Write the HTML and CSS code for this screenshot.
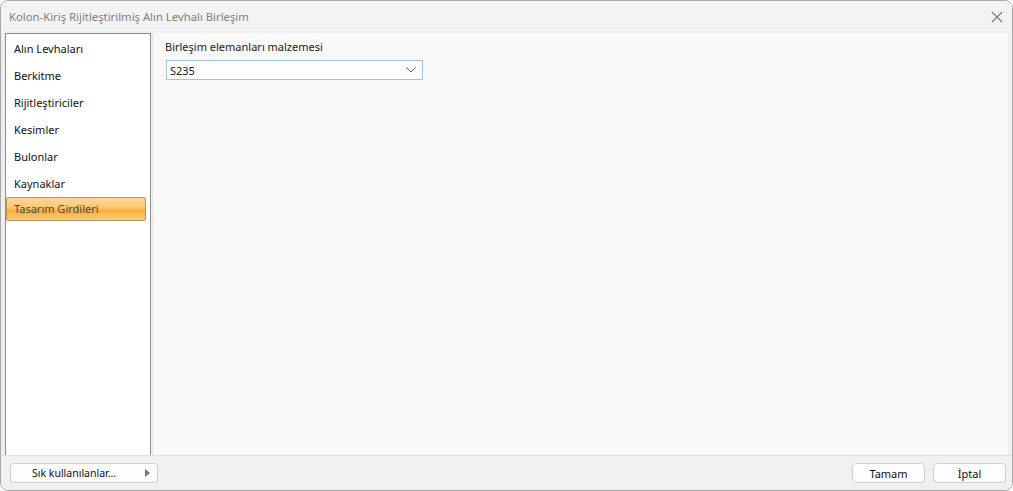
FILE: index.html
```html
<!DOCTYPE html>
<html>
<head>
<meta charset="utf-8">
<link rel="stylesheet" href="styles.css">
</head>
<body>
<div class="window">
  <div class="titlebar">
    <span class="title">Kolon-Kiriş Rijitleştirilmiş Alın Levhalı Birleşim</span>
    <svg class="close" width="12" height="12" viewBox="0 0 12 12"><path d="M1 1L11 11M11 1L1 11" stroke="#7a7a7a" stroke-width="1.1" fill="none"/></svg>
  </div>
  <div class="body">
    <div class="nav">
      <div class="item">Alın Levhaları</div>
      <div class="item">Berkitme</div>
      <div class="item">Rijitleştiriciler</div>
      <div class="item">Kesimler</div>
      <div class="item">Bulonlar</div>
      <div class="item">Kaynaklar</div>
      <div class="item selected">Tasarım Girdileri</div>
    </div>
    <div class="content">
      <div class="label">Birleşim elemanları malzemesi</div>
      <div class="select">
        <span>S235</span>
        <svg width="10" height="6" viewBox="0 0 10 6"><path d="M0.5 0.5L5 5L9.5 0.5" stroke="#666" stroke-width="1" fill="none"/></svg>
      </div>
    </div>
  </div>
  <div class="footer">
    <div class="favbtn"><span class="favtext">Sık kullanılanlar…</span><svg class="arrow" width="5" height="8" viewBox="0 0 5 8"><path d="M0 0L5 4L0 8Z" fill="#777"/></svg></div>
    <div class="spacer"></div>
    <div class="btn ok">Tamam</div>
    <div class="btn ok">İptal</div>
  </div>
</div>
</body>
</html>
```

FILE: styles.css
```css
html, body {
  margin: 0;
  padding: 0;
  background: #ffffff;
}
body {
  font-family: "Noto Sans", "Open Sans", sans-serif;
  font-size: 11px;
  color: #1a1a1a;
}
.window {
  width: 1013px;
  height: 491px;
  box-sizing: border-box;
  border: 1px solid #a8a8a8;
  border-radius: 8px;
  overflow: hidden;
  background: #f0f0f0;
  display: flex;
  flex-direction: column;
}
.titlebar {
  height: 30px;
  flex: none;
  background: #f3f3f3;
  display: flex;
  align-items: center;
  justify-content: space-between;
  padding: 0 9px 0 8px;
}
.title {
  font-size: 11.3px;
  color: #808080;
}
.close {
  margin-top: 1px;
}
.body {
  flex: 1;
  display: flex;
  padding: 2px 4px 0 4px;
  background: #f0f0f0;
  min-height: 0;
}
.nav {
  width: 146px;
  flex: none;
  background: #ffffff;
  border: 1px solid #8e8e8e;
  padding-top: 1px;
  box-sizing: border-box;
  height: 423px;
}
.item {
  height: 27px;
  line-height: 27px;
  padding-left: 8px;
  color: #111;
}
.item.selected {
  margin: 0 4px 0 0;
  height: 24px;
  line-height: 22px;
  box-sizing: border-box;
  border: 1px solid #b9975b;
  border-radius: 2px;
  padding-left: 7px;
  color: #4a4a4a;
  background: linear-gradient(#fdd999 0%, #fcc56e 45%, #f9ac3c 55%, #fbcd74 100%);
}
.content {
  flex: 1;
  margin-left: 1px;
  background: #f9f9f9;
  border-left: 1px solid #e6e6e6;
  padding: 6px 0 0 12px;
}
.label {
  color: #222;
  height: 16px;
  line-height: 16px;
}
.select {
  margin-top: 5px;
  margin-left: 1px;
  width: 257px;
  height: 20px;
  box-sizing: border-box;
  border: 1px solid #a5c1df;
  background: #fdfdff;
  display: flex;
  align-items: center;
  justify-content: space-between;
  padding: 0 6px 0 3px;
}
.footer {
  height: 34px;
  flex: none;
  display: flex;
  align-items: center;
  padding: 0 6px 0 9px;
  background: #f0f0f0;
  border-top: 1px solid #e0e0e0;
}
.spacer { flex: 1; }
.btn {
  height: 20px;
  box-sizing: border-box;
  border: 1px solid #cfcfcf;
  border-radius: 4px;
  background: #fdfdfd;
  display: flex;
  align-items: center;
  justify-content: center;
  color: #111;
}
.favbtn {
  width: 148px;
  height: 20px;
  flex: none;
  box-sizing: border-box;
  border: 1px solid #cfcfcf;
  border-radius: 4px;
  background: #fdfdfd;
  display: flex;
  align-items: center;
  color: #111;
}
.favtext {
  margin-left: 21px;
  font-size: 10.5px;
  white-space: nowrap;
}
.arrow {
  margin-left: auto;
  margin-right: 7px;
  flex: none;
}
.ok {
  width: 73px;
  flex: none;
  margin-left: 8px;
}
```
